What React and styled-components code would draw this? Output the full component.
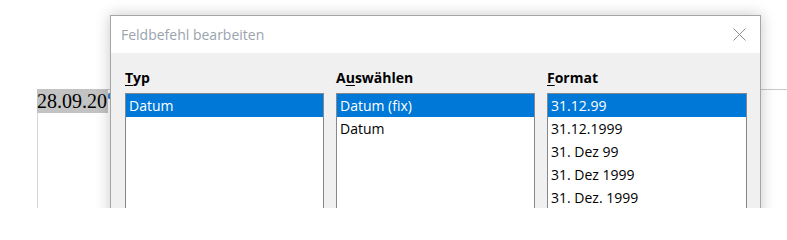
import React from 'react';
import styled, { createGlobalStyle } from 'styled-components';

const GlobalStyle = createGlobalStyle`
  html, body {
    margin: 0;
    padding: 0;
    background: #fff;
    overflow: hidden;
  }
`;

const columns = [
  { label: 'Typ', key: 0, items: ['Datum'] },
  { label: 'Auswählen', key: 1, items: ['Datum (fix)', 'Datum'] },
  {
    label: 'Format',
    key: 0,
    items: ['31.12.99', '31.12.1999', '31. Dez 99', '31. Dez 1999', '31. Dez. 1999'],
  },
];

function Mnemonic({ text, at }) {
  return (
    <>
      {text.slice(0, at)}
      <Key>{text[at]}</Key>
      {text.slice(at + 1)}
    </>
  );
}

export default function App() {
  return (
    <Stage>
      <GlobalStyle />
      <Page>
        <TextFrame>
          <Highlight>28.09.20</Highlight>
          <Cursor />
        </TextFrame>
      </Page>

      <Dialog>
        <TitleBar>
          <Title>Feldbefehl bearbeiten</Title>
          <CloseButton aria-label="Schließen">
            <svg width="13" height="13" viewBox="0 0 13 13">
              <path d="M0.5 0.5 L12.5 12.5 M12.5 0.5 L0.5 12.5" stroke="#8c8c8c" strokeWidth="1" fill="none" />
            </svg>
          </CloseButton>
        </TitleBar>
        <Body>
          {columns.map((col) => (
            <Column key={col.label}>
              <Label>
                <Mnemonic text={col.label} at={col.key} />
              </Label>
              <ListBox>
                {col.items.map((item, i) => (
                  <Row key={item} $selected={i === 0}>
                    {item}
                  </Row>
                ))}
              </ListBox>
            </Column>
          ))}
        </Body>
      </Dialog>
    </Stage>
  );
}

const Stage = styled.div`
  position: relative;
  width: 787px;
  height: 208px;
  overflow: hidden;
  background: #fff;
`;

const Page = styled.div`
  padding: 89px 0 0 37px;
`;

const TextFrame = styled.div`
  position: relative;
  height: 140px;
  border-top: 1px solid #c9c9c9;
  border-left: 1px solid #d6d6d6;
`;

const Highlight = styled.span`
  display: inline-block;
  margin: -1px 0 0 -1px;
  height: 24px;
  padding-right: 1px;
  background: #c3c3c3;
  color: #000;
  font-family: 'Liberation Serif', serif;
  font-size: 20px;
  line-height: 25px;
`;

const Cursor = styled.span`
  position: absolute;
  left: 70px;
  top: 3px;
  width: 3px;
  height: 6px;
  border-radius: 2px;
  background: #2f7fd0;
`;

const Dialog = styled.div`
  position: absolute;
  left: 110px;
  top: 15px;
  width: 649px;
  bottom: -40px;
  display: flex;
  flex-direction: column;
  border: 1px solid #a6a6a6;
  background: #f0f0f0;
  box-shadow: 0 0 14px rgba(0, 0, 0, 0.22);
  font-family: 'Open Sans', 'Noto Sans', sans-serif;
  font-size: 14px;
`;

const TitleBar = styled.div`
  display: flex;
  align-items: center;
  justify-content: space-between;
  height: 37px;
  padding: 0 14px 0 10px;
  background: #fff;
`;

const Title = styled.span`
  color: #9aa3ae;
  font-size: 14px;
  line-height: 19px;
`;

const CloseButton = styled.span`
  display: flex;
  width: 13px;
  height: 13px;
`;

const Body = styled.div`
  flex: 1;
  display: grid;
  grid-template-columns: 199px 199px 200px;
  column-gap: 12px;
  padding: 15px 13px 0 14px;
`;

const Column = styled.div`
  display: flex;
  flex-direction: column;
`;

const Label = styled.div`
  height: 20px;
  margin-bottom: 5px;
  color: #000;
  font-weight: 700;
  line-height: 20px;
`;

const Key = styled.span`
  text-decoration: underline;
  text-underline-offset: 2px;
  text-decoration-thickness: 1px;
`;

const ListBox = styled.div`
  flex: 1;
  border: 1px solid #828790;
  background: #fff;
`;

const Row = styled.div`
  height: 23px;
  padding: 0 3px;
  line-height: 24px;
  white-space: nowrap;
  color: ${(p) => (p.$selected ? '#fff' : '#000')};
  background: ${(p) => (p.$selected ? '#0078d7' : 'transparent')};
`;
